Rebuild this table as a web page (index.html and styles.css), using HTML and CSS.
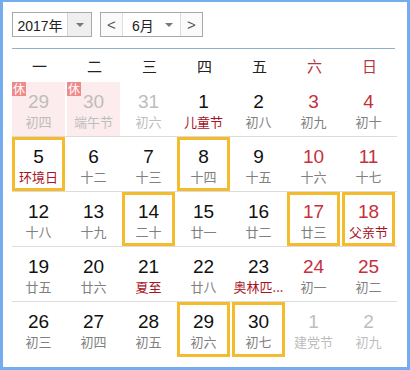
FILE: index.html
```html
<!DOCTYPE html>
<html lang="zh-CN">
<head>
<meta charset="utf-8">
<link rel="stylesheet" href="styles.css">
</head>
<body>
<div class="frame">
  <div class="toolbar">
    <div class="select year">
      <span class="sel-text">2017年</span>
      <span class="sel-arrow"><span class="tri"></span></span>
    </div>
    <div class="select month">
      <span class="nav">&lt;</span>
      <span class="sel-text mtext"><span>6月</span><span class="tri"></span></span>
      <span class="nav">&gt;</span>
    </div>
  </div>
  <div class="rule"></div>
  <div class="weekdays">
    <span>一</span><span>二</span><span>三</span><span>四</span><span>五</span><span class="we">六</span><span class="we">日</span>
  </div>
  <div class="grid">
    <div class="cell"><div class="day rest other"><i class="badge">休</i><b>29</b><em>初四</em></div></div>
    <div class="cell"><div class="day rest other"><i class="badge">休</i><b>30</b><em>端午节</em></div></div>
    <div class="cell"><div class="day other"><b>31</b><em>初六</em></div></div>
    <div class="cell"><div class="day"><b>1</b><em class="fest">儿童节</em></div></div>
    <div class="cell"><div class="day"><b>2</b><em>初八</em></div></div>
    <div class="cell"><div class="day wkend"><b>3</b><em>初九</em></div></div>
    <div class="cell"><div class="day wkend"><b>4</b><em>初十</em></div></div>

    <div class="cell"><div class="day mark"><b>5</b><em class="fest">环境日</em></div></div>
    <div class="cell"><div class="day"><b>6</b><em>十二</em></div></div>
    <div class="cell"><div class="day"><b>7</b><em>十三</em></div></div>
    <div class="cell"><div class="day mark"><b>8</b><em>十四</em></div></div>
    <div class="cell"><div class="day"><b>9</b><em>十五</em></div></div>
    <div class="cell"><div class="day wkend"><b>10</b><em>十六</em></div></div>
    <div class="cell"><div class="day wkend"><b>11</b><em>十七</em></div></div>

    <div class="cell"><div class="day"><b>12</b><em>十八</em></div></div>
    <div class="cell"><div class="day"><b>13</b><em>十九</em></div></div>
    <div class="cell"><div class="day mark"><b>14</b><em>二十</em></div></div>
    <div class="cell"><div class="day"><b>15</b><em>廿一</em></div></div>
    <div class="cell"><div class="day"><b>16</b><em>廿二</em></div></div>
    <div class="cell"><div class="day wkend mark"><b>17</b><em>廿三</em></div></div>
    <div class="cell"><div class="day wkend mark"><b>18</b><em class="fest">父亲节</em></div></div>

    <div class="cell"><div class="day"><b>19</b><em>廿五</em></div></div>
    <div class="cell"><div class="day"><b>20</b><em>廿六</em></div></div>
    <div class="cell"><div class="day"><b>21</b><em class="fest">夏至</em></div></div>
    <div class="cell"><div class="day"><b>22</b><em>廿八</em></div></div>
    <div class="cell"><div class="day"><b>23</b><em class="fest">奥林匹...</em></div></div>
    <div class="cell"><div class="day wkend"><b>24</b><em>初一</em></div></div>
    <div class="cell"><div class="day wkend"><b>25</b><em>初二</em></div></div>

    <div class="cell last"><div class="day"><b>26</b><em>初三</em></div></div>
    <div class="cell last"><div class="day"><b>27</b><em>初四</em></div></div>
    <div class="cell last"><div class="day"><b>28</b><em>初五</em></div></div>
    <div class="cell last"><div class="day mark"><b>29</b><em>初六</em></div></div>
    <div class="cell last"><div class="day mark"><b>30</b><em>初七</em></div></div>
    <div class="cell last"><div class="day other"><b>1</b><em>建党节</em></div></div>
    <div class="cell last"><div class="day other"><b>2</b><em>初九</em></div></div>
  </div>
</div>
</body>
</html>
```

FILE: styles.css
```css
* { box-sizing: border-box; }
html, body { margin: 0; padding: 0; background: #fff; }
body { font-family: "Liberation Sans", "Noto Sans CJK SC", sans-serif; color: #111; }

.frame {
  width: 410px;
  height: 370px;
  border: 3px solid #74acef;
  border-top-width: 2px;
  padding: 10px 0 0 9px;
  overflow: hidden;
}

.toolbar { display: flex; gap: 8px; height: 25px; }
.select {
  display: flex;
  border: 1px solid #a9a9a9;
  height: 25px;
  font-size: 14px;
  font-family: "Liberation Sans", "Noto Sans CJK SC", sans-serif;
  color: #222;
  white-space: nowrap;
}
.year { width: 80px; }
.year .sel-text { width: 54px; display: flex; align-items: center; justify-content: center; }
.sel-arrow {
  width: 24px;
  background: #efefef;
  border-left: 1px solid #d6d6d6;
  display: flex; align-items: center; justify-content: center;
}
.tri {
  width: 0; height: 0;
  border-left: 4px solid transparent;
  border-right: 4px solid transparent;
  border-top: 4px solid #777;
  display: inline-block;
}
.month { width: 103px; }
.nav {
  width: 22px;
  flex: none;
  display: flex; align-items: center; justify-content: center;
  color: #555;
  font-size: 15px;
  background: #fafafa;
}
.nav:first-child { border-right: 1px solid #ddd; }
.nav:last-child { border-left: 1px solid #ddd; }
.mtext {
  flex: 1;
  min-width: 0;
  display: flex;
  align-items: center;
  justify-content: space-between;
  padding: 0 7px 0 9px;
}

.rule { width: 383px; height: 1px; background: #8fb1cc; margin-top: 11px; }

.weekdays {
  display: grid;
  grid-template-columns: repeat(7, 55px);
  height: 33px;
  align-items: center;
  font-family: "Noto Sans CJK SC", sans-serif;
  font-size: 15px;
  color: #222;
}
.weekdays span { text-align: center; }
.weekdays .we { color: #b83440; }

.grid {
  display: grid;
  grid-template-columns: repeat(7, 55px);
  grid-auto-rows: 55px;
  width: 385px;
}
.cell {
  border-bottom: 1px solid #dcdcdc;
  padding: 0 2px 0 0;
}
.cell.last { border-bottom: none; }
.day {
  position: relative;
  height: 100%;
  display: flex;
  flex-direction: column;
  align-items: center;
  padding-top: 6px;
  border: 3px solid transparent;
}
.day b {
  font-weight: normal;
  font-size: 19px;
  line-height: 22px;
  font-family: "Liberation Sans", sans-serif;
}
.day em {
  font-style: normal;
  font-size: 13px;
  line-height: 18px;
  color: #808080;
  white-space: nowrap;
  font-family: "Noto Sans CJK SC", sans-serif;
}
.day em.fest { color: #a8141e; }
.wkend b { color: #c6303d; }
.other b { color: #bdbdbd; }
.other em { color: #bdbdbd; }
.rest { background: #fcecee; border-color: #fcecee; }
.mark { border-color: #f4bc2c; }
.badge {
  position: absolute;
  left: -3px;
  top: -3px;
  width: 14px;
  height: 14px;
  background: #ef8a8a;
  color: #fff;
  font-style: normal;
  font-size: 12px;
  line-height: 14px;
  text-align: center;
  font-family: "Noto Sans CJK SC", sans-serif;
}
```
